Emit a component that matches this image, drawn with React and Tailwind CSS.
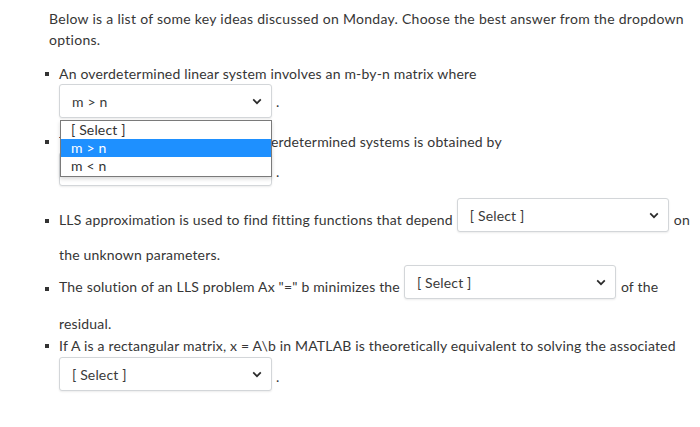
import React from "react";

const FONT = { fontFamily: "Lato, 'Open Sans', sans-serif" };

function Chevron() {
  return (
    <svg width="10" height="7" viewBox="0 0 10 7" className="shrink-0">
      <path d="M1.2 1.4 L5 5.2 L8.8 1.4" fill="none" stroke="#2b2b2b" strokeWidth="1.7" />
    </svg>
  );
}

function FakeSelect({ value = "[ Select ]", width = "w-[213px]" }) {
  return (
    <div
      className={`${width} h-[34px] shrink-0 flex items-center justify-between pl-[12px] pr-[9px] bg-white border border-[#d3d6d9] rounded-[3px] shadow-[0_1px_2px_rgba(0,0,0,0.08)] text-[14px] tracking-[0.15px] text-[#3a3a3a]`}
    >
      <span>{value}</span>
      <Chevron />
    </div>
  );
}

function Bullet({ className = "" }) {
  return <span className={`absolute left-[-14px] w-[4px] h-[4px] bg-[#333] ${className}`} />;
}

function Row({ children, className = "" }) {
  return <div className={`relative flex items-center whitespace-nowrap ${className}`}>{children}</div>;
}

export default function App() {
  return (
    <div className="w-[700px] h-[427px] bg-white text-[#363636] text-[14px]" style={FONT}>
      <div className="relative pl-[49px] pt-[8px]">
        <p className="leading-[21px] whitespace-nowrap tracking-[0.28px]">
          Below is a list of some key ideas discussed on Monday. Choose the best answer from the dropdown
          <br />
          options.
        </p>

        <div className="pl-[10px] tracking-[0.18px]">
          {/* item 1 */}
          <Row className="h-[20px] mt-[13px]">
            <Bullet className="top-[9px]" />
            An overdetermined linear system involves an m-by-n matrix where
          </Row>
          <Row className="mt-[1px] items-end">
            <FakeSelect value="m > n" />
            <span className="ml-[4px] mb-[6px]">.</span>
          </Row>

          {/* item 2 */}
          <Row className="h-[20px] mt-[13px]">
            <Bullet className="top-[9px]" />
            <span className="inline-block w-[212px] overflow-hidden">The least squares solution of ov</span>
            <span>erdetermined systems is obtained by</span>
          </Row>
          <Row className="mt-[1px] items-end">
            <FakeSelect />
            <span className="ml-[4px] mb-[4px]">.</span>
          </Row>

          {/* item 3 */}
          <Row className="mt-[12px]">
            <Bullet className="top-[21px]" />
            <span className="mt-[9px] mr-[4px]">LLS approximation is used to find fitting functions that depend</span>
            <FakeSelect width="w-[212px]" />
            <span className="mt-[9px] ml-[5px]">on</span>
          </Row>
          <Row className="h-[20px] mt-[12px]">the unknown parameters.</Row>

          {/* item 4 */}
          <Row className="mt-[1px]">
            <Bullet className="top-[22px]" />
            <span className="mt-[9px] mr-[4px]">The solution of an LLS problem Ax "=" b minimizes the</span>
            <FakeSelect width="w-[212px]" />
            <span className="mt-[9px] ml-[5px]">of the</span>
          </Row>
          <Row className="h-[20px] mt-[14px]">residual.</Row>

          {/* item 5 */}
          <Row className="h-[20px] mt-[2px]">
            <Bullet className="top-[9px]" />
            If A is a rectangular matrix, x = A\b in MATLAB is theoretically equivalent to solving the associated
          </Row>
          <Row className="mt-[2px] items-end">
            <FakeSelect />
            <span className="ml-[4px] mb-[4px]">.</span>
          </Row>
        </div>

        {/* open dropdown list */}
        <div className="absolute left-[60px] top-[120px] w-[212px] bg-white border border-[#7a7a7a] shadow-[0_2px_4px_rgba(0,0,0,0.15)] text-[14px] leading-[18px] tracking-[0.15px] text-[#333]">
          <div className="h-[18px] pl-[10px]">[ Select ]</div>
          <div className="h-[18px] pl-[10px] bg-[#1e90ff] text-white">m &gt; n</div>
          <div className="h-[19px] pl-[10px]">m &lt; n</div>
        </div>
      </div>
    </div>
  );
}
